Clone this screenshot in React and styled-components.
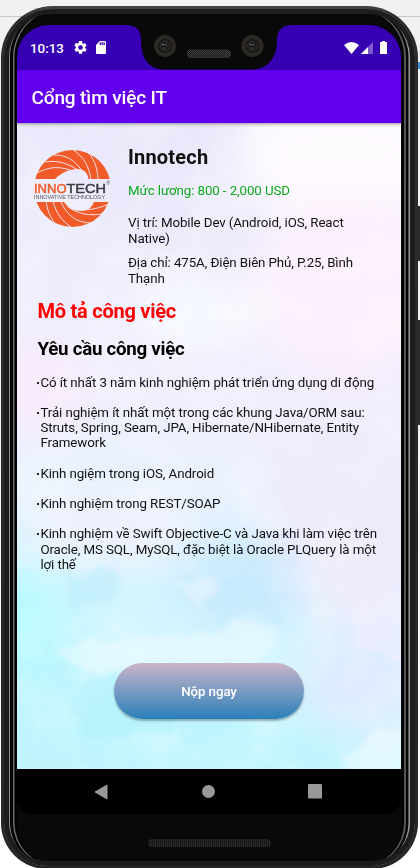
import React from "react";
import styled, { createGlobalStyle } from "styled-components";

const GlobalStyle = createGlobalStyle`
  * { box-sizing: border-box; }
  body { margin: 0; background: #fff; font-family: Roboto, "Noto Sans", sans-serif; }
  h1, h2, p, ul { margin: 0; padding: 0; font-weight: 400; }
`;

const Desk = styled.div`
  position: relative;
  width: 420px;
  height: 868px;
  overflow: hidden;
  background: linear-gradient(#f1f1f1 0 16px, #c8c8c8 16px 17px, #f1f1f1 17px 420px, #fff 830px);
`;
const SideKey = styled.i`
  position: absolute;
  right: 0;
  width: 3px;
  top: ${(p) => p.$top}px;
  height: ${(p) => p.$height}px;
  background: ${(p) => p.$color || "#2a2a2a"};
`;
const Phone = styled.div`
  position: relative;
  width: 417px;
  height: 863px;
  margin: 6px 0 0 1px;
  padding: 3px;
  border-radius: 52px 52px 46px 46px;
  background: linear-gradient(#424442, #2c2c2c 12px, #262626);
`;
const Bezel = styled.div`
  height: 857px;
  padding: 16px 13px 0;
  border-radius: 48px 48px 43px 43px;
  background: #090909;
  box-shadow: inset 0 0 0 5px #1d1d1d, inset 6px 0 0 #8a8a8a, inset -6.5px 0 0 #9a9a9a,
    inset 9px 0 0 #050505, inset -9px 0 0 #050505,
    inset 10.5px 0 0 #6c6c6c, inset -11px 0 0 #555,
    inset 13px 0 0 #020202, inset -13px 0 0 #020202;
`;
const Screen = styled.main`
  display: flex;
  flex-direction: column;
  width: 384px;
  height: 789px;
  overflow: hidden;
  border-radius: 32px 32px 16px 16px;
  background: #000;
`;
const StatusBar = styled.div`
  position: relative;
  display: flex;
  align-items: center;
  height: 45px;
  padding: 0 14px 0 13px;
  background: #3700b3;
  color: #fff;
  font-size: 13.33px;
  font-weight: 500;
`;
const Clock = styled.span`
  width: 43px;
  padding-top: 1px;
`;
const Notch = styled.svg`
  position: absolute;
  left: 108px;
  top: 0;
`;
const StatusIcon = styled.svg`
  display: block;
  margin-left: ${(p) => p.$gap || 0}px;
`;
const Spacer = styled.span`flex: 1;`;
const AppBar = styled.header`
  position: relative;
  z-index: 1;
  display: flex;
  align-items: center;
  height: 53px;
  padding: 2px 15px 0 14.5px;
  background: #6200ee;
  box-shadow: 0 1px 3px rgba(0, 0, 0, 0.4);
`;
const AppTitle = styled.h1`
  color: #fff;
  font-size: 19px;
  font-weight: 500;
  letter-spacing: -0.13px;
`;
const Content = styled.section`
  position: relative;
  height: 646px;
  color: #111;
`;
const Sky = styled.svg`
  position: absolute;
  inset: 0;
`;
const Body = styled.div`
  position: relative;
  display: flex;
  flex-direction: column;
  height: 100%;
`;
const Summary = styled.div`
  display: grid;
  grid-template-columns: 78px 1fr;
  column-gap: 16px;
  padding: 22px 24px 0 17px;
`;
const Logo = styled.svg`margin-top: 4px;`;
const Company = styled.h2`
  font-size: 20px;
  line-height: 24px;
  font-weight: 700;
  letter-spacing: 0.2px;
`;
const Detail = styled.p`
  margin-top: ${(p) => p.$gap}px;
  font-size: 13.33px;
  line-height: 15.2px;
  letter-spacing: -0.105px;
  color: ${(p) => p.$color || "#111"};
`;
const Heading = styled.h2`
  margin: ${(p) => p.$gap}px 0 0 20.5px;
  font-size: ${(p) => p.$size}px;
  line-height: 24px;
  font-weight: 700;
  letter-spacing: -0.25px;
  color: ${(p) => p.$color || "#000"};
`;
const Requirements = styled.ul`
  margin: 13.6px 0 0 20px;
  list-style: none;
`;
const Requirement = styled.li`
  display: flex;
  margin-bottom: 15px;
  font-size: 13.33px;
  line-height: 15.3px;
  letter-spacing: -0.105px;
  white-space: pre-line;

  &::before {
    content: "";
    flex: none;
    width: 2px;
    height: 2px;
    margin: 7px 1.4px 0 0;
    background: #222;
  }
`;
const Apply = styled.button`
  position: absolute;
  left: 97px;
  top: 540px;
  width: 190px;
  height: 56px;
  border: 0;
  border-radius: 28px;
  background: linear-gradient(#cbb4ca, #2980b9);
  box-shadow: 0 2px 2px rgba(0, 0, 0, 0.3);
  color: #fff;
  font: 500 13.33px Roboto, sans-serif;
  letter-spacing: -0.1px;
`;
const NavBar = styled.nav`
  display: flex;
  justify-content: space-between;
  align-items: center;
  height: 45px;
  padding: 0 79px 0 77px;
  background: #000;
`;
const Speaker = styled.div`
  width: 123px;
  height: 8px;
  margin: 25px auto 0;
  border-radius: 4px;
  background: repeating-linear-gradient(90deg, #191919 0 1px, #262626 1px 2px);
`;

const requirements = [
  "Có ít nhất 3 năm kinh nghiệm phát triển ứng dụng di động",
  "Trải nghiệm ít nhất một trong các khung Java/ORM sau:\nStruts, Spring, Seam, JPA, Hibernate/NHibernate, Entity\nFramework",
  "Kinh ngiệm trong iOS, Android",
  "Kinh nghiệm trong REST/SOAP",
  "Kinh nghiệm về Swift Objective-C và Java khi làm việc trên\nOracle, MS SQL, MySQL, đặc biệt là Oracle PLQuery là một\nlợi thế",
];

function Watercolor() {
  return (
    <Sky width="384" height="646" viewBox="0 0 384 646">
      <defs>
        <linearGradient id="wash" x1="0.3" y1="0" x2="0.15" y2="1">
          <stop offset="0" stopColor="#e9e8fb" />
          <stop offset="0.42" stopColor="#f0effd" />
          <stop offset="0.62" stopColor="#e0f3fe" />
          <stop offset="0.72" stopColor="#cff5fe" />
          <stop offset="0.85" stopColor="#bff5fe" />
          <stop offset="1" stopColor="#c0f5fe" />
        </linearGradient>
        <filter id="soft" x="-60%" y="-60%" width="220%" height="220%"><feGaussianBlur stdDeviation="22" /></filter>
        <filter id="edge" x="-30%" y="-30%" width="160%" height="160%">
          <feTurbulence type="fractalNoise" baseFrequency="0.04" numOctaves="4" seed="9" />
          <feDisplacementMap in="SourceGraphic" scale="22" xChannelSelector="R" yChannelSelector="G" />
          <feGaussianBlur stdDeviation="2.5" />
        </filter>
        <filter id="clouds" x="0" y="0" width="100%" height="100%">
          <feTurbulence type="fractalNoise" baseFrequency="0.018" numOctaves="5" seed="3" />
          <feColorMatrix values="0 0 0 0 1  0 0 0 0 1  0 0 0 0 1  2.6 0 0 0 -1.1" />
        </filter>
      </defs>
      <rect width="384" height="646" fill="url(#wash)" />
      <g filter="url(#soft)">
        <ellipse cx="325" cy="35" rx="110" ry="65" fill="#fefbff" />
        <ellipse cx="330" cy="165" rx="100" ry="95" fill="#fceffd" />
        <ellipse cx="20" cy="265" rx="55" ry="50" fill="#f8eafc" />
        <ellipse cx="175" cy="190" rx="65" ry="40" fill="#f7f9ff" />
        <ellipse cx="340" cy="380" rx="90" ry="120" fill="#eeeafc" />
        <ellipse cx="5" cy="500" rx="40" ry="50" fill="#b5fbff" />
        <ellipse cx="90" cy="400" rx="90" ry="40" fill="#eef1fd" />
        <ellipse cx="225" cy="465" rx="65" ry="45" fill="#c6e9fe" />
        <ellipse cx="120" cy="505" rx="60" ry="25" fill="#d9f6ff" />
        <ellipse cx="350" cy="560" rx="75" ry="55" fill="#dfecfe" />
      </g>
      <rect width="384" height="646" filter="url(#clouds)" opacity=".28" />
      <g filter="url(#edge)">
        <path d="M155 513l45-4 25-14 30 6 8 18-35 22-75 2-75 8-40-22 50-14z" fill="#effbff" opacity=".5" />
        <path d="M335 482l55-15v70l-50-10z" fill="#f2efff" opacity=".55" />
        <path d="M45 452l55-6 8 22-50 20z" fill="#b4e9fd" opacity=".4" />
        <path d="M155 458l45-6 6 14-24 20z" fill="#edf8ff" opacity=".5" />
        <path d="M50 585l40-35 60 5 10 50-90 10z" fill="#a5edfc" opacity=".3" />
        <path d="M335 625l55-25v56h-60z" fill="#eefaff" opacity=".6" />
      </g>
    </Sky>
  );
}

function InnotechLogo() {
  return (
    <Logo width="78" height="80" viewBox="0 0 78 80">
      <defs>
        <clipPath id="caps"><path d="M0 0h78v30H0zM0 53h78v27H0z" /></clipPath>
      </defs>
      <g clipPath="url(#caps)">
        <path fillRule="evenodd" fill="#f15a29" d="M38.5 1a38.500 38.500 0 1 1 0 77a38.500 38.500 0 1 1 0-77zM44 20C35 20 27 24 21 30L30 53C34 59 40 62 47 62C54 62 58 58 60 53L54 28C53 23 49 20 44 20z" />
        <g stroke="#f4eefc" strokeWidth=".9" fill="none">
          <path d="M20 6c14 0 25 7 32 24M38 0c12 8 17 17 19 31M55 4c6 8 9 17 9 28M11 13c12-2 22 1 33 8M3 24c11-6 21-7 33-3" />
          <path d="M58 74c-14 0-24-6-31-21M38 79C27 71 22 64 19 52M22 76C16 68 13 61 12 51M68 65c-12 2-24 0-34-7M75 55c-12 5-22 7-33 5" />
        </g>
      </g>
      <text x="0" y="43.800" fontFamily="Liberation Sans, sans-serif" fontSize="13" textLength="32.500" lengthAdjust="spacingAndGlyphs" fill="#f15a29" stroke="#f15a29" strokeWidth=".5">INNO</text>
      <text x="32.500" y="43.800" fontFamily="Liberation Sans, sans-serif" fontSize="13" textLength="39.500" lengthAdjust="spacingAndGlyphs" fill="#3d3b42" stroke="#3d3b42" strokeWidth=".5">TECH</text>
      <text x="72.500" y="36" fontSize="4.500" fill="#555">®</text>
      <text x="0" y="49.500" fontFamily="Liberation Sans, sans-serif" fontSize="4.600" textLength="71" lengthAdjust="spacingAndGlyphs" fill="#55515c">INNOVATIVE TECHNOLOGY</text>
    </Logo>
  );
}

function CameraNotch() {
  return (
    <Notch width="170" height="45" viewBox="0 0 170 45">
      <defs>
        <pattern id="mesh" width="2" height="2" patternUnits="userSpaceOnUse">
          <path d="M0 0h1v1H0zM1 1h1v1H1z" fill="#444" />
        </pattern>
      </defs>
      <path d="M0 0c12 0 16 5 16 16c0 18 8 28.500 24 28.500h86c17 0 26-12 26-28.500c0-11 5-16 16-16z" fill="#090909" />
      {[40, 127.5].map((x) => (
        <g key={x}>
          <circle cx={x} cy="21" r="11" fill="#2c2925" />
          <circle cx={x} cy="21" r="7" fill="#151515" />
          <circle cx={x} cy="21" r="5" fill="#1d1d1e" stroke="#3f3b38" strokeWidth=".8" />
          <path d={`M${x - 3} 19l2 1M${x} 19l1.500 1.500M${x - 1} 23l1 .5`} stroke="#888" strokeWidth="1" />
        </g>
      ))}
      <rect x="62" y="24.500" width="44" height="8.500" rx="4" fill="#171717" />
      <rect x="62" y="24.500" width="44" height="8.500" rx="4" fill="url(#mesh)" />
    </Notch>
  );
}

export default function App() {
  return (
    <>
      <GlobalStyle />
      <Desk>
        <SideKey $top={62} $height={7} $color="#3d8fd6" />
        <SideKey $top={206} $height={55} />
        <SideKey $top={320} $height={105} />
        <Phone>
          <Bezel>
            <Screen>
              <StatusBar>
                <Clock>10:13</Clock>
                <StatusIcon $gap={1} width="13" height="13" viewBox="2 2 20 20" fill="#fff">
                  <path d="M19.140 12.940c.04-.3.060-.61.060-.94 0-.32-.02-.64-.07-.94l2.030-1.580a.49.49 0 0 0 .12-.61l-1.920-3.320a.49.49 0 0 0-.59-.22l-2.390.96a7 7 0 0 0-1.620-.94l-.36-2.540A.48.48 0 0 0 13.920 2h-3.840a.48.48 0 0 0-.47.41l-.36 2.540c-.59.24-1.130.57-1.620.94l-2.390-.96a.49.49 0 0 0-.59.22L2.740 8.870a.48.48 0 0 0 .12.61l2.030 1.580a7 7 0 0 0 0 1.880l-2.030 1.580a.49.49 0 0 0-.12.61l1.920 3.320c.12.22.37.29.59.22l2.390-.96c.5.38 1.030.7 1.620.94l.36 2.540c.05.24.24.41.48.41h3.840c.24 0 .44-.17.47-.41l.36-2.540a7 7 0 0 0 1.620-.94l2.390.96c.22.080.47 0 .59-.22l1.920-3.320a.48.48 0 0 0-.12-.61zM12 15.600A3.600 3.600 0 1 1 12 8.400a3.600 3.600 0 0 1 0 7.200z" />
                </StatusIcon>
                <StatusIcon $gap={9} width="10" height="13" viewBox="4 2 16 20" preserveAspectRatio="none" fill="#fff">
                  <path d="M18 2h-8L4 8v12c0 1.100.9 2 2 2h12c1.100 0 2-.9 2-2V4c0-1.100-.9-2-2-2zm-6 6h-2V4h2v4zm3 0h-2V4h2v4zm3 0h-2V4h2v4z" />
                </StatusIcon>
                <Spacer />
                <StatusIcon width="15" height="12" viewBox="0 0 15 12">
                  <path d="M0 3Q7.500-3 15 3L7.500 12z" fill="#fff" />
                </StatusIcon>
                <StatusIcon $gap={2} width="12" height="12" viewBox="0 0 12 12">
                  <path d="M0 12L12 0v12z" fill="#fff" opacity=".35" />
                  <path d="M0 12l7-7v7z" fill="#fff" />
                </StatusIcon>
                <StatusIcon $gap={7} width="7" height="13" viewBox="0 0 7 13">
                  <path d="M2 0h3v1h2v12H0V1h2z" fill="#fff" />
                </StatusIcon>
                <CameraNotch />
              </StatusBar>
              <AppBar><AppTitle>Cổng tìm việc IT</AppTitle></AppBar>
              <Content>
                <Watercolor />
                <Body>
                  <Summary>
                    <InnotechLogo />
                    <div>
                      <Company>Innotech</Company>
                      <Detail $gap={14} $color="#10a81c">Mức lương: 800 - 2,000 USD</Detail>
                      <Detail $gap={17.2}>Vị trí: Mobile Dev (Android, iOS, React<br />Native)</Detail>
                      <Detail $gap={9.6}>Địa chỉ: 475A, Điện Biên Phủ, P.25, Bình<br />Thạnh</Detail>
                    </div>
                  </Summary>
                  <Heading $gap={13.2} $size={20} $color="#f00">Mô tả công việc</Heading>
                  <Heading $gap={14} $size={18.7}>Yêu cầu công việc</Heading>
                  <Requirements>
                    {requirements.map((text) => <Requirement key={text}><span>{text}</span></Requirement>)}
                  </Requirements>
                  <Apply>Nộp ngay</Apply>
                </Body>
              </Content>
              <NavBar>
                <svg width="14" height="16" viewBox="0 0 14 16"><path d="M1 8L13 1v14z" fill="#999" stroke="#999" strokeLinejoin="round" /></svg>
                <svg width="14" height="14" viewBox="0 0 14 14"><circle cx="7.500" cy="6.500" r="6.500" fill="#999" /></svg>
                <svg width="14" height="15" viewBox="0 0 14 15"><rect width="14" height="14.500" rx="1" fill="#999" /></svg>
              </NavBar>
            </Screen>
            <Speaker />
          </Bezel>
        </Phone>
      </Desk>
    </>
  );
}
